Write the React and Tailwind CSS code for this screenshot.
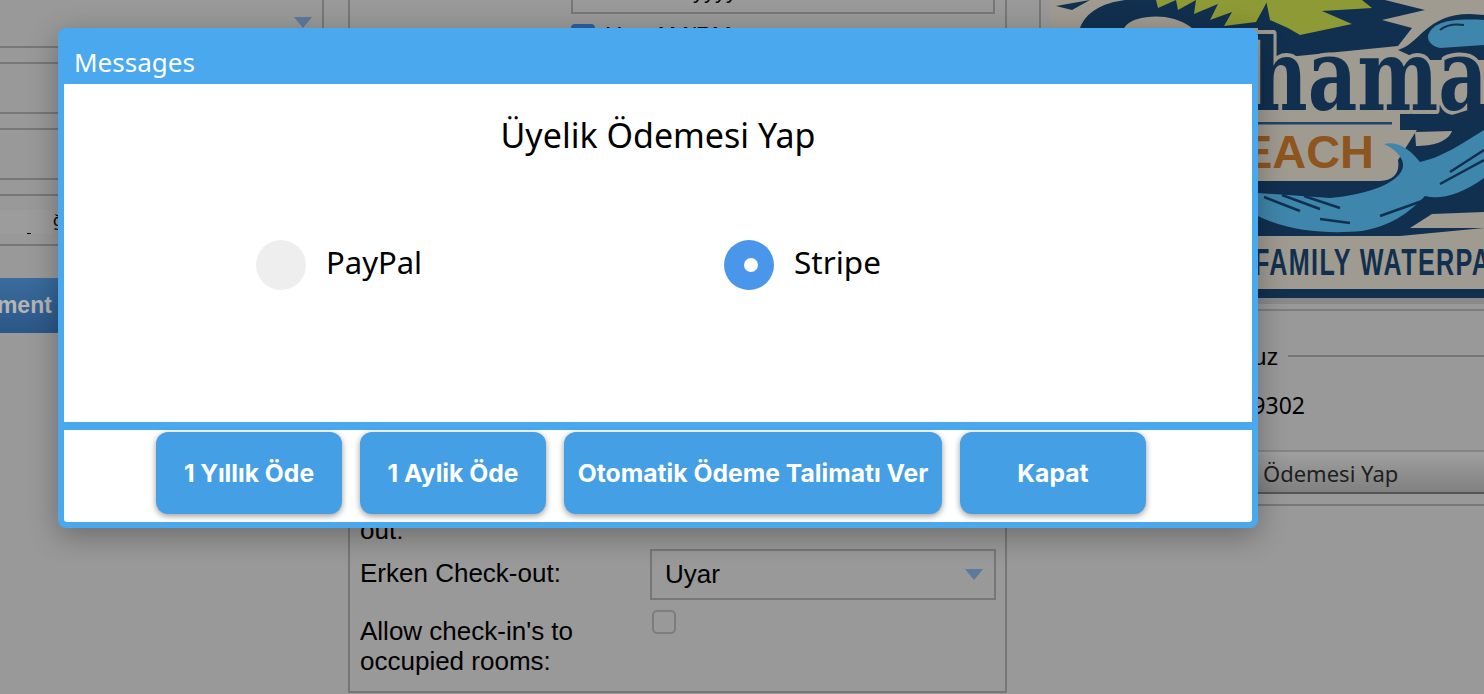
const buttons = [
  { label: "1 Yıllık Öde", width: "w-[186px]" },
  { label: "1 Aylik Öde", width: "w-[186px]" },
  { label: "Otomatik Ödeme Talimatı Ver", width: "w-[378px]" },
  { label: "Kapat", width: "w-[186px]" },
];

function Logo() {
  return (
    <svg viewBox="1039 0 445 311" className="block w-[445px] h-[311px]">
      <rect x="1039" y="0" width="445" height="311" fill="#999999" />
      <rect x="1039" y="0" width="2" height="311" fill="#777777" />
      <rect x="1050" y="0" width="434" height="296" fill="#a09b91" />
      {/* palm leaves */}
      <path d="M1056 6 L1090 0 L1072 10 Z" fill="#11304f" />
      <path d="M1080 28 C1086 12 1102 3 1125 0 L1385 0 L1425 10 L1382 20 L1412 28 L1398 46 L1258 60 L1258 28 Z" fill="#11304f" />
      <path d="M1124 28 C1130 18 1150 15 1165 17 C1178 19 1188 24 1194 30 L1160 30 Z" fill="#a09b91" />
      <path d="M1156 0 L1158 8 L1176 0 L1178 10 L1196 0 L1194 14 L1218 4 L1210 20 L1232 12 L1224 26 L1256 22 L1268 0 Z" fill="#8d9a35" />
      <path d="M1266 0 L1362 0 L1372 8 L1322 11 L1352 24 L1300 35 L1288 28 L1270 20 Z" fill="#8d9a35" />
      {/* wave crest */}
      <path d="M1398 50 C1420 44 1426 14 1470 14 L1484 15 L1484 60 L1420 60 Z" fill="#11304f" />
      <path d="M1428 36 C1432 22 1450 18 1484 20 L1484 45 L1440 48 C1432 46 1428 42 1428 36 Z" fill="#3f86ac" />
      <path d="M1440 30 C1446 25 1456 24 1464 25" stroke="#11304f" strokeWidth="2" fill="none" />
      <rect x="1400" y="105" width="84" height="25" fill="#11304f" />
      <text x="1252" y="110" fontFamily="DejaVu Serif, serif" fontWeight="700" fontSize="100" textLength="236" lengthAdjust="spacingAndGlyphs" fill="#11304f" stroke="#a09b91" strokeWidth="8" paintOrder="stroke" strokeLinejoin="round">hama</text>
      <rect x="1258" y="122" width="134" height="2.5" fill="#1f4468" />
      <text x="1241" y="168" fontFamily="Liberation Sans, sans-serif" fontWeight="700" fontSize="47" textLength="133" lengthAdjust="spacingAndGlyphs" fill="#8f551e">EACH</text>
      {/* wave body */}
      <path d="M1258 181 L1380 181 C1395 180 1400 172 1398 160 L1420 125 L1484 105 L1484 228 L1400 236 L1258 236 Z" fill="#11304f" />
      <path d="M1415 132 L1452 131 C1448 142 1432 146 1416 146 Z" fill="#a09b91" />
      <path d="M1384 144 C1400 140 1412 152 1420 162 C1440 158 1460 145 1484 130 L1484 178 C1460 195 1440 200 1425 196 C1408 214 1390 226 1362 231 C1330 234 1290 232 1258 216 L1258 193 L1330 198 C1370 195 1410 180 1402 160 C1398 152 1392 148 1384 144 Z" fill="#3f86ac" />
      <path d="M1264 197 L1300 211 M1282 195 L1320 209 M1304 196 L1340 208 M1320 219 L1350 223 M1425 200 L1380 216 M1440 184 L1484 160 M1450 172 L1484 150" stroke="#11304f" strokeWidth="2.5" fill="none" />
      <path d="M1410 228 L1432 214 L1484 212 L1484 228 Z" fill="#a09b91" />
      <rect x="1258" y="237" width="226" height="52" fill="#a09b91" />
      <text transform="scale(0.68,1)" x="1844" y="275" fontFamily="Liberation Sans, sans-serif" fontWeight="700" fontSize="37" letterSpacing="2" fill="#11304f">FAMILY WATERPA</text>
      <rect x="1050" y="289" width="434" height="9" fill="#11304f" />
      <rect x="1050" y="298" width="434" height="6" fill="#8a8a8a" />
      <rect x="1050" y="309" width="434" height="2" fill="#7c7c7c" />
    </svg>
  );
}

function Arrow() {
  return <div className="w-0 h-0 border-x-[9px] border-x-transparent border-t-[11px] border-t-[#5d7a9c]" />;
}

function LeftColumn() {
  return (
    <div className="w-[324px] shrink-0 -mt-[4px]">
      <div className="h-[52px] border-y-2 border-r-2 border-[#777] flex justify-end items-center pr-[10px]">
        <Arrow />
      </div>
      <div className="h-[52px] mt-[14px] border-y-2 border-r-2 border-[#777]" />
      <div className="h-[52px] mt-[14px] border-y-2 border-r-2 border-[#777]" />
      <div className="h-[52px] mt-[14px] border-y-2 border-r-2 border-[#777] flex items-center">
        <div className="w-[53px] h-[24px] bg-[#9c9c9c] flex items-end pl-[27px] shrink-0 mt-[4px]">
          <div className="w-[4px] h-[1px] bg-black" />
        </div>
        <span className="font-['Noto_Sans',sans-serif] text-[16px] text-black leading-none">ğ</span>
      </div>
      <div className="h-[55px] mt-[32px] -ml-[60px] w-[200px] rounded bg-gradient-to-b from-[#3a6c9e] to-[#2b5786] flex items-center pl-[16px] font-['Liberation_Sans',sans-serif] font-bold text-[23px] text-[#b5b5b5]">
        Payment
      </div>
    </div>
  );
}

function MiddlePanel() {
  return (
    <div className="w-[659px] shrink-0 ml-[24px] h-[693px] border-x-2 border-b-2 border-[#777] flex flex-col font-['Liberation_Sans',sans-serif] text-[26px] text-black">
      <div className="h-[14px] ml-[221px] mr-[10px] border-x-2 border-b-2 border-[#777] pl-[120px] overflow-visible">
        <div className="-mt-[22px] text-[22px] leading-[26px]">yyyy</div>
      </div>
      <div className="flex items-center gap-[10px] ml-[221px] mt-[10px] h-[24px]">
        <div className="w-[24px] h-[24px] rounded bg-[#2f5e9e]" />
        <span className="leading-none text-[24px]">Use AM/PM</span>
      </div>
      <div className="flex-1" />
      <div className="pl-[10px] leading-[30px] mb-[4px] -mt-[1px]">out:</div>
      <div className="flex items-center pl-[10px] h-[51px]">
        <div className="w-[290px] shrink-0 -mt-[2px]">Erken Check-out:</div>
        <div className="w-[346px] h-[51px] border-2 border-[#777] flex items-center justify-between pl-[13px] pr-[11px]">
          <span>Uyar</span>
          <Arrow />
        </div>
      </div>
      <div className="flex pl-[10px] mt-[7px] mb-[15px]">
        <div className="w-[290px] shrink-0 leading-[30px] pt-[9px]">
          Allow check-in's to
          <br />
          occupied rooms:
        </div>
        <div className="w-[24px] h-[24px] mt-[3px] ml-[2px] rounded-[5px] border-2 border-[#7d7d7d]" />
      </div>
    </div>
  );
}

function RightColumn() {
  return (
    <div className="ml-[32px] w-[445px] shrink-0 font-['Noto_Sans',sans-serif] text-black">
      <Logo />
      <div className="flex items-center h-[24px] mt-[33px]">
        <div className="w-[239px] text-right text-[24px] leading-none">Yavuz</div>
        <div className="flex-1 h-[2px] ml-[10px] bg-[#767676]" />
      </div>
      <div className="h-[26px] mt-[24px] w-[266px] text-right text-[23px] leading-[26px]">5559302</div>
      <div className="h-[44px] mt-[32px] flex items-center pl-[224px] pt-[3px] bg-gradient-to-b from-[#a0a0a0] to-[#808080] border-t-2 border-b-2 border-t-[#858585] border-b-[#555] text-[22px] text-[#1e1e1e]">
        Ödemesi Yap
      </div>
      <div className="h-[2px] mt-[10px] bg-[#777]" />
    </div>
  );
}

function Modal() {
  return (
    <div className="absolute left-[58px] top-[28px] w-[1200px] h-[500px] rounded-lg border-[6px] border-[#4aa8ef] bg-[#4aa8ef] shadow-[0_8px_30px_rgba(0,0,0,0.3)] font-['Noto_Sans',sans-serif] flex flex-col">
      <div className="h-[50px] shrink-0 pl-[10px] pt-[11px] text-[26px] leading-[34px] text-white">Messages</div>
      <div className="h-[338px] shrink-0 bg-white text-black">
        <div className="text-center text-[34px] leading-[44px] pt-[29px]">Üyelik Ödemesi Yap</div>
        <div className="flex mt-[83px] pl-[192px]">
          <div className="w-[468px] flex items-center gap-[20px]">
            <div className="w-[50px] h-[50px] rounded-full bg-[#eeeeee]" />
            <span className="text-[31px] leading-[40px] -mt-[7px]">PayPal</span>
          </div>
          <div className="flex items-center gap-[20px]">
            <div className="w-[50px] h-[50px] rounded-full bg-[#4a96ea] flex items-center justify-center">
              <div className="w-[14px] h-[14px] ml-[3px] rounded-full bg-white" />
            </div>
            <span className="text-[31.5px] leading-[40px] -mt-[7px]">Stripe</span>
          </div>
        </div>
      </div>
      <div className="h-[92px] mt-[8px] shrink-0 bg-white rounded-b-[3px] flex gap-[18px] pl-[92px] pt-[2px]">
        {buttons.map((b) => (
          <button
            key={b.label}
            className={`${b.width} h-[82px] pt-[2px] rounded-xl bg-[#459fe4] shadow-[0_2px_6px_rgba(0,0,0,0.4)] text-white font-['Inter',sans-serif] font-bold text-[24.7px]`}
          >
            {b.label}
          </button>
        ))}
      </div>
    </div>
  );
}

export default function App() {
  return (
    <div className="relative w-[1484px] h-[694px] overflow-hidden bg-[#999999] flex items-start">
      <LeftColumn />
      <MiddlePanel />
      <RightColumn />
      <Modal />
    </div>
  );
}
